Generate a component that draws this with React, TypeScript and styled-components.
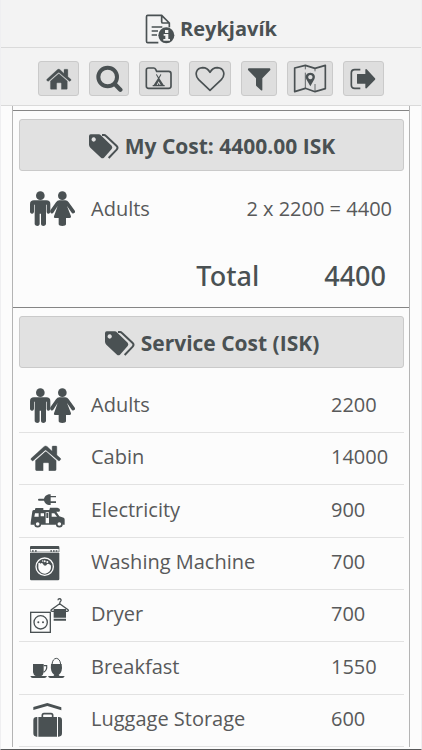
import React from "react";
import styled, { createGlobalStyle } from "styled-components";

const ink = "#4a5153";

const GlobalStyle = createGlobalStyle`
  * { box-sizing: border-box; }
  body {
    margin: 0;
    background: #fcfcfc;
    color: #58595a;
    font-family: "Open Sans", "Noto Sans", sans-serif;
    font-size: 20px;
    line-height: 28px;
  }
`;

const Page = styled.div`
  height: 100vh;
  display: flex;
  flex-direction: column;
  border: solid #efeff1;
  border-width: 0 1px;
  border-bottom: 1px solid #58595a;
`;

const TitleBar = styled.header`
  display: flex;
  align-items: center;
  justify-content: center;
  gap: 5px;
  height: 48px;
  padding-top: 10px;
  background: #f3f3f3;
  border-bottom: 1px solid #dadada;
  flex: none;
`;

const Title = styled.h1`
  margin: 0;
  color: ${ink};
  font-size: 20px;
  line-height: 28px;
  font-weight: 700;
`;

const Toolbar = styled.nav`
  display: flex;
  justify-content: center;
  gap: 10px;
  padding: 13px 0 9px;
  background: #f3f3f3;
  border-bottom: 1px solid #dadada;
  flex: none;
`;

const ToolButton = styled.button<{ $width: number }>`
  display: flex;
  align-items: center;
  justify-content: center;
  width: ${(p) => p.$width}px;
  height: 35px;
  padding: 0;
  background: #dedede;
  border: 1px solid #cacaca;
  border-radius: 3px;
`;

const Content = styled.main`
  flex: 1;
  min-height: 0;
  overflow-y: auto;
  scrollbar-width: none;
  padding: 0 11px;
`;

const Sheet = styled.div`
  padding-top: 4px;
  border: solid #b4b4b4;
  border-width: 0 1px;
`;

const Panel = styled.section`
  padding: 8px 5px 0 6px;
  border-top: 1px solid #858585;
`;

const PanelHeading = styled.h2`
  margin: 0;
`;

const PanelButton = styled.button`
  display: flex;
  align-items: center;
  justify-content: center;
  gap: 6px;
  width: 100%;
  height: 52px;
  padding: 2px 0 0;
  background: #e1e1e1;
  border: 1px solid #cacaca;
  border-radius: 3px;
  color: ${ink};
  font: inherit;
  font-size: 21px;
  font-weight: 700;
`;

const Summary = styled.dl`
  margin: 0;
`;

const CostLine = styled.div`
  display: flex;
  align-items: center;
  justify-content: space-between;
  height: 75px;
  padding: 0 12px 0 11px;
`;

const CostName = styled.dt`
  display: flex;
  align-items: center;
  gap: 15px;
`;

const Amount = styled.dd`
  margin: 0;
`;

const TotalLine = styled(CostLine)`
  justify-content: flex-end;
  gap: 65px;
  height: 61px;
  padding: 0 18px 2px 11px;
  color: ${ink};
  font-family: "Noto Sans", "Open Sans", sans-serif;
  font-size: 27px;
  font-weight: 500;
`;

const PriceTable = styled.table`
  width: 100%;
  margin-top: 12px;
  border-collapse: collapse;
  table-layout: fixed;
`;

const PriceRow = styled.tr`
  height: 52px;
  border-bottom: 1px solid #e2e2e2;
  &:nth-child(3n) { height: 53px; }
`;

const IconCell = styled.td`
  width: 72px;
  padding: 0 0 0 11px;
`;

const NameCell = styled.th`
  padding: 0 0 2px;
  font-weight: 400;
  text-align: left;
`;

const PriceCell = styled.td`
  width: 73px;
  padding: 0 0 2px;
`;

const Drawing = styled.svg`
  display: block;
  flex: none;
  fill: ${ink};
  stroke: none;
`;

type IconProps = { box: string; w: number; h: number; children: React.ReactNode };

const Icon = ({ box, w, h, children }: IconProps) => (
  <Drawing viewBox={box} width={w} height={h} aria-hidden="true">
    {children}
  </Drawing>
);

const Doc = () => (
  <Icon box="18 18 90 90" w={30} h={30}>
    <path d="M58 104H26Q22.500 104 22.500 100V26Q22.500 22 26 22H68L91 45V58M68 23V41Q68 45 72 45H90" fill="none" stroke={ink} strokeWidth="5" />
    <path d="M38 57H70M38 69H57M38 81H54" stroke={ink} strokeWidth="5" />
    <circle cx="82" cy="82" r="24" />
    <path d="M78 66h10v9h-10zM74 78h14v15h5v5H73v-5h6V83h-5z" fill="#f3f3f3" />
  </Icon>
);

const housePath =
  "M0 36 36 3Q40 0 44 3L58 16V4Q58 2 60 2H69Q71 2 71 4V27L81 36Q83 38 81 40L79 42Q77 44 75 42L42 14Q40 12 38 14L6 42Q4 44 2 42L0 40Q-2 38 0 36ZM12 42 39 18Q40 17 42 18L69 42V67Q69 70 66 70H49V50Q49 48 47 48H35Q33 48 33 50V70H15Q12 70 12 67Z";

const House = ({ w, h }: { w: number; h: number }) => (
  <Icon box="-3 -1 88 72" w={w} h={h}>
    <path d={housePath} stroke={ink} strokeWidth="1" />
  </Icon>
);

const Search = () => (
  <Icon box="195 30 81 81" w={27} h={27}>
    <circle cx="230" cy="66" r="28" fill="none" stroke={ink} strokeWidth="12" />
    <path d="M252 88 268 104" stroke={ink} strokeWidth="13" strokeLinecap="round" />
  </Icon>
);

const CampFolder = () => (
  <Icon box="345 30 84 75" w={28} h={25}>
    <path d="M355 36H371Q375 36 377 40L380 46H416Q423 46 423 53V91Q423 97 416 97H356Q349 97 349 91V42Q349 36 355 36Z" fill="none" stroke={ink} strokeWidth="5" />
    <path d="M380 54 386 64 392 54 394 56 388 67 401 87H404V91H368V87H371L384 67 378 56ZM386 76 380 87H383L386 81 389 87H392Z" />
  </Icon>
);

const Heart = () => (
  <Icon box="585 195 90 78" w={30} h={26}>
    <path d="M630 268 596 236C582 220 589 201 608 200Q622 200 630 214Q638 200 652 200C671 201 678 220 664 236Z" fill="none" stroke={ink} strokeWidth="5" strokeLinejoin="round" />
  </Icon>
);

const Funnel = () => (
  <Icon box="111 36 72 72" w={24} h={24}>
    <path d="M116 40H179Q182 41 181 45L157 70V105Q156 108 153 106L139 93Q138 92 138 90V70L114 45Q113 41 116 40Z" />
  </Icon>
);

const MapPin = () => (
  <Icon box="249 24 102 90" w={34} h={30}>
    <path d="M254 36 286 28 315 37 346 28V98L315 107 286 97 254 107Z" fill="none" stroke={ink} strokeWidth="5" strokeLinejoin="round" />
    <path d="M286 28V40M286 50V97M315 37V46M315 84V107" stroke={ink} strokeWidth="2.500" />
    <path fillRule="evenodd" d="M301 91 289 70C284 59 290 50 301 50S318 59 313 70ZM301 57a6.500 6.500 0 1 0 .1 0Z" />
  </Icon>
);

const Exit = () => (
  <Icon box="420 36 81 66" w={27} h={22}>
    <path d="M451 41H434Q424 41 424 51V87Q424 97 434 97H451" fill="none" stroke={ink} strokeWidth="5" />
    <path d="M441 55Q441 54 442 54H466V41Q467 38 470 40L495 67Q497 69 495 71L470 97Q467 98 466 96V83H442Q441 83 441 82Z" />
  </Icon>
);

const Tags = () => (
  <Icon box="264 99 93 81" w={31} h={27}>
    <path fillRule="evenodd" d="M272 103H296Q300 103 304 107L335 137Q339 142 335 147L312 173Q307 177 303 173L271 143Q267 139 267 134V109Q267 103 272 103ZM281 112a6.500 6.500 0 1 0 .1 0Z" />
    <path d="M306 105H312Q315 105 318 108L350 138Q355 143 350 149L326 174" fill="none" stroke={ink} strokeWidth="6" />
  </Icon>
);

const Couple = () => (
  <Icon box="30 24 138 108" w={46} h={36}>
    <circle cx="61" cy="38" r="13" />
    <path d="M42 52H79Q91 52 91 63V87Q89 94 83 92L80 88V65H78V124Q76 129 70 129Q64 129 63 124V92H59V124Q58 129 52 129Q46 129 44 124V65H42V87Q40 94 35 92Q30 91 30 87V63Q30 52 42 52Z" />
    <circle cx="127" cy="38" r="13" />
    <path d="M118 52H136Q142 52 146 58L165 84Q167 90 161 91Q157 93 154 88L141 69L153 100Q154 105 149 105H138V124Q137 129 127 129Q117 129 116 124V105H105Q100 105 102 100L113 69L101 88Q98 93 93 91Q89 88 91 82L108 58Q112 52 118 52Z" />
  </Icon>
);

const Camper = () => (
  <Icon box="30 36 108 108" w={36} h={36}>
    <path d="M54 56Q54 53 57 53H72Q75 43 86 40H92V45H108V49H92V61H108V66H92V72H86Q75 69 72 59H57Q54 59 54 56Z" />
    <path fillRule="evenodd" d="M45 87V83Q46 81 49 81H70V87H88L90 80H112Q120 81 120 88L118 92H109L118 106 131 110Q134 112 134 116V131H129A12 12 0 0 0 107 131H64A12 12 0 0 0 42 131H32V125L37 91Q38 87 42 87ZM45 97 43 107H56V97ZM62 97V106H72V97ZM77 94V127H87V94ZM95 97V107H111L103 97Z" />
    <g fill="#fcfcfc" stroke={ink} strokeWidth="5"><circle cx="53" cy="129" r="8" /><circle cx="118" cy="129" r="8" /></g>
    <path d="M79 96h6v15h-6z" />
  </Icon>
);

const Washer = () => (
  <Icon box="30 195 90 108" w={30} h={36}>
    <path d="M33 198H115Q118 198 118 201V207H30V201Q30 198 33 198Z" />
    <path d="M31 206V216H117V206" fill="none" stroke={ink} strokeWidth="2" />
    <path d="M36 211h5v4h-5zM45 211h5v4h-5zM91 211h5v4h-5zM99 211h5v4h-5zM107 211h5v4h-5z" />
    <path d="M30 219H118V297Q118 301 114 301H34Q30 301 30 297Z" />
    <circle cx="74" cy="260" r="26" fill="none" stroke="#fcfcfc" strokeWidth="4" />
    <path d="M55 250Q58 246 61 251Q66 246 69 252Q72 259 79 256Q82 248 88 253Q94 255 93 260A19 19 0 0 1 55 264Z" fill="#fcfcfc" />
    <g fill="#fcfcfc"><circle cx="74" cy="244" r="3" /><circle cx="82" cy="246" r="3" /><circle cx="68" cy="243" r="2" /></g>
  </Icon>
);

const Dryer = () => (
  <Icon box="30 21 120 111" w={40} h={37}>
    <g fill="none" stroke={ink} strokeWidth="4">
      <rect x="32" y="67" width="59" height="60" />
      <circle cx="62" cy="97" r="20" />
      <path d="M114 31Q114 26 119 26Q124 27 123 32Q119 35 119 41L94 59Q91 64 97 64H142Q147 63 144 59L119 41" />
    </g>
    <circle cx="55" cy="97" r="3" />
    <circle cx="69" cy="97" r="3" />
    <path d="M101 57H138V83H101ZM101 86H138V92H101Z" />
  </Icon>
);

const Breakfast = () => (
  <Icon box="30 201 108 66" w={36} h={22}>
    <path d="M39 222H71V247Q70 255 64 258H81Q79 264 73 264H38Q33 264 31 258H47Q40 255 39 247Z" />
    <path d="M71 227H80Q82 240 71 247" fill="none" stroke={ink} strokeWidth="3.500" />
    <path d="M96 223Q98 206 109 205Q120 206 122 223" fill="none" stroke={ink} strokeWidth="3" />
    <path d="M93 222H125Q129 246 116 255L119 258H134Q132 264 127 264H91Q86 264 84 258H100L103 255Q90 246 93 222Z" />
  </Icon>
);

const Luggage = () => (
  <Icon box="30 336 96 108" w={32} h={36}>
    <path d="M40 351 82 339 124 352V361L82 348 40 360Z" />
    <path d="M67 382V376Q67 371 72 371H93Q98 371 98 376V382" fill="none" stroke={ink} strokeWidth="5" />
    <path d="M52 381V440H50Q40 440 40 430V391Q40 381 50 381ZM55 381H111V440H55ZM114 381H116Q126 381 126 391V430Q126 440 116 440H114Z" />
  </Icon>
);

const tools = [
  { label: "Home", width: 41, icon: <House w={26} h={22} /> },
  { label: "Search", width: 40, icon: <Search /> },
  { label: "Campsites", width: 40, icon: <CampFolder /> },
  { label: "Favourites", width: 42, icon: <Heart /> },
  { label: "Filter", width: 36, icon: <Funnel /> },
  { label: "Map", width: 46, icon: <MapPin /> },
  { label: "Exit", width: 41, icon: <Exit /> },
];

const services = [
  { name: "Adults", price: 2200, icon: <Couple /> },
  { name: "Cabin", price: 14000, icon: <House w={32} h={26} /> },
  { name: "Electricity", price: 900, icon: <Camper /> },
  { name: "Washing Machine", price: 700, icon: <Washer /> },
  { name: "Dryer", price: 700, icon: <Dryer /> },
  { name: "Breakfast", price: 1550, icon: <Breakfast /> },
  { name: "Luggage Storage", price: 600, icon: <Luggage /> },
];

export default function App() {
  return (
    <>
      <GlobalStyle />
      <Page>
        <TitleBar>
          <Doc />
          <Title>Reykjavík</Title>
        </TitleBar>
        <Toolbar>
          {tools.map((t) => (
            <ToolButton key={t.label} $width={t.width} aria-label={t.label}>
              {t.icon}
            </ToolButton>
          ))}
        </Toolbar>
        <Content>
          <Sheet>
            <Panel>
              <PanelHeading>
                <PanelButton>
                  <Tags />
                  My Cost: 4400.00 ISK
                </PanelButton>
              </PanelHeading>
              <Summary>
                <CostLine>
                  <CostName>
                    <Couple />
                    Adults
                  </CostName>
                  <Amount>2 x 2200 = 4400</Amount>
                </CostLine>
                <TotalLine>
                  <dt>Total</dt>
                  <Amount>4400</Amount>
                </TotalLine>
              </Summary>
            </Panel>
            <Panel>
              <PanelHeading>
                <PanelButton>
                  <Tags />
                  Service Cost (ISK)
                </PanelButton>
              </PanelHeading>
              <PriceTable>
                <tbody>
                  {services.map((s) => (
                    <PriceRow key={s.name}>
                      <IconCell>{s.icon}</IconCell>
                      <NameCell scope="row">{s.name}</NameCell>
                      <PriceCell>{s.price}</PriceCell>
                    </PriceRow>
                  ))}
                </tbody>
              </PriceTable>
            </Panel>
          </Sheet>
        </Content>
      </Page>
    </>
  );
}
